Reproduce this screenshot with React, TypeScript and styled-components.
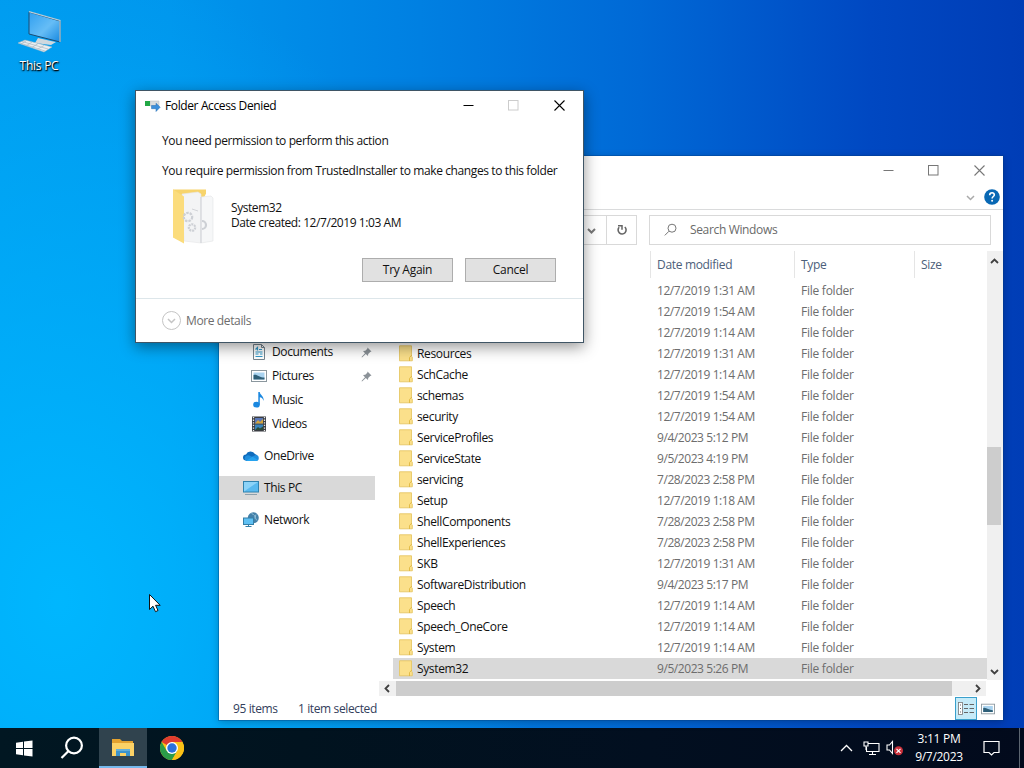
import React from "react";
import styled, { createGlobalStyle, css } from "styled-components";

const GlobalStyle = createGlobalStyle`
  * { box-sizing: border-box; }
  html, body { margin: 0; padding: 0; overflow: hidden; }
  body { font-family: "Open Sans", "Noto Sans", sans-serif; font-size: 12px; line-height: 16px; color: #111; letter-spacing: -0.38px; }
`;

const Desktop = styled.main`
  position: relative;
  width: 1024px;
  height: 768px;
  overflow: hidden;
  display: flex;
  flex-direction: column;
  justify-content: space-between;
  background:
    radial-gradient(ellipse 480px 640px at 60px 600px, rgba(0, 184, 255, 0.95), rgba(0, 180, 255, 0) 100%),
    linear-gradient(90deg, #009bef 0, #0096ed 170px, #0080e2 420px, #0069d6 640px, #0048c2 870px, #003db6 1024px);
`;

const Shortcut = styled.div`
  width: 78px;
  padding-top: 9px;
  display: flex;
  flex-direction: column;
  align-items: center;
  gap: 3px;
  color: #fff;
  letter-spacing: -0.25px;
  text-shadow: 0 1px 2px #000, 1px 1px 1px #000;
`;

const Panel = styled.section`
  position: absolute;
  display: flex;
  flex-direction: column;
  background: #fff;
`;

const ExplorerWindow = styled(Panel)`
  left: 219px;
  top: 156px;
  width: 784px;
  height: 564px;
  box-shadow: 0 0 0 1px rgba(0, 60, 130, 0.35), 0 2px 8px rgba(0, 0, 0, 0.25);
`;

const DialogWindow = styled(Panel)`
  left: 135px;
  top: 90px;
  width: 449px;
  height: 253px;
  border: 1px solid #3f5565;
  box-shadow: 0 4px 14px rgba(0, 0, 0, 0.42);
`;

const Caption = styled.header`
  height: 29px;
  padding-right: 1px;
  flex: none;
  display: flex;
  align-items: center;
  justify-content: flex-end;
`;

const CaptionTitle = styled.div`
  flex: 1;
  display: flex;
  align-items: center;
  gap: 4px;
  padding-left: 9px;
  color: #000;
`;

const CaptionButton = styled.button<{ $color: string }>`
  width: 45.5px;
  height: 29px;
  padding: 0;
  border: 0;
  background: none;
  display: flex;
  align-items: center;
  justify-content: center;
  color: ${(p) => p.$color};
`;

const Ribbon = styled.div`
  height: 25px;
  flex: none;
  border-bottom: 1px solid #dadbdc;
  display: flex;
  justify-content: flex-end;
  align-items: center;
  gap: 9px;
  padding-right: 3px;
`;

const AddressRow = styled.div`
  height: 41px;
  flex: none;
  display: flex;
  align-items: flex-start;
  padding: 5px 12px 0 12px;
  gap: 12px;
`;

const AddressBox = styled.div`
  flex: 1;
  height: 30px;
  border: 1px solid #d9d9d9;
  display: flex;
  justify-content: flex-end;
`;

const AddressCell = styled.div<{ $w: number; $line?: boolean }>`
  width: ${(p) => p.$w}px;
  display: flex;
  align-items: center;
  justify-content: center;
  ${(p) => p.$line && css`border-left: 1px solid #d9d9d9;`}
`;

const SearchBox = styled.div`
  width: 342px;
  height: 30px;
  border: 1px solid #d9d9d9;
  display: flex;
  align-items: center;
  gap: 12px;
  padding-left: 14px;
  color: #6a6a6a;
  letter-spacing: -0.35px;
`;

const Body = styled.div`
  flex: 1;
  min-height: 0;
  display: flex;
`;

const NavPane = styled.nav`
  width: 156px;
  padding-top: 89px;
  display: flex;
  flex-direction: column;
`;

const NavItem = styled.div<{ $child?: boolean; $gap?: boolean; $active?: boolean }>`
  height: 24px;
  flex: none;
  margin-top: ${(p) => (p.$gap ? 8 : 0)}px;
  padding: 0 3px 0 ${(p) => (p.$child ? 32 : 24)}px;
  display: flex;
  align-items: center;
  gap: 5px;
  background: ${(p) => (p.$active ? "#d9d9d9" : "transparent")};
  svg:last-child { margin-left: auto; }
  svg:first-child { margin-left: 0; }
`;

const ListArea = styled.div`
  flex: 1;
  min-width: 0;
  margin-left: 4px;
  display: flex;
  flex-direction: column;
`;

const ListTop = styled.div`
  height: 429px;
  flex: none;
  display: flex;
`;

const FileList = styled.div`
  flex: 1;
  display: flex;
  flex-direction: column;
  padding-left: 14px;
`;

const columns = "258px 144px 120px 1fr";

const HeaderRow = styled.div`
  height: 29px;
  flex: none;
  display: grid;
  grid-template-columns: ${columns};
`;

const HeaderCell = styled.div`
  height: 27px;
  padding: 6px 0 0 6px;
  border-right: 1px solid #e5e5e5;
  color: #4c607a;
  letter-spacing: -0.32px;
  &:last-child { border-right: 0; }
`;

const FileRow = styled.div<{ $selected?: boolean }>`
  height: 21px;
  flex: none;
  display: grid;
  grid-template-columns: ${columns};
  align-items: center;
  background: ${(p) => (p.$selected ? "#d9d9d9" : "transparent")};
`;

const NameCell = styled.div`
  display: flex;
  align-items: center;
  gap: 4px;
  padding-left: 6px;
  letter-spacing: -0.36px;
`;

const DataCell = styled.div<{ $ls: number }>`
  padding-left: 6px;
  color: #6d6d6d;
  letter-spacing: ${(p) => p.$ls}px;
`;

const VScroll = styled.div`
  width: 16px;
  background: #f0f0f0;
  display: flex;
  flex-direction: column;
  align-items: center;
  padding: 6px 2px 4px 0;
  svg:last-child { margin-top: auto; }
`;

const VThumb = styled.div`
  width: 14px;
  height: 78px;
  flex: none;
  margin-top: 181px;
  background: #cdcdcd;
`;

const HScroll = styled.div`
  height: 15px;
  width: 607px;
  margin-top: 1px;
  flex: none;
  background: #f0f0f0;
  display: flex;
  align-items: center;
`;

const HArrow = styled.div<{ $w: number; $pad?: number }>`
  width: ${(p) => p.$w}px;
  padding-left: ${(p) => p.$pad ?? 0}px;
  display: flex;
  justify-content: center;
`;

const HThumb = styled.div`
  width: 556px;
  height: 15px;
  background: #cdcdcd;
`;

const StatusBar = styled.footer`
  height: 23px;
  flex: none;
  display: flex;
  align-items: center;
  padding: 0 4px 0 14px;
  color: #33405c;
`;

const StatusText = styled.span<{ $w?: number }>`
  width: ${(p) => (p.$w ? p.$w + "px" : "auto")};
  margin-right: ${(p) => (p.$w ? 0 : "auto")};
`;

const ViewButton = styled.button<{ $on?: boolean }>`
  width: 22px;
  height: 23px;
  padding: 0;
  display: flex;
  align-items: center;
  justify-content: center;
  border: ${(p) => (p.$on ? "1px solid #3aa0cc" : "1px solid transparent")};
  background: ${(p) => (p.$on ? "#c6ebf8" : "transparent")};
`;

const DialogBody = styled.div`
  flex: 1;
  display: flex;
  flex-direction: column;
  padding: 13px 27px 0 26px;
  color: #111;
`;

const Message = styled.p`
  margin: 0 0 14px;
  white-space: nowrap;
  letter-spacing: -0.39px;
`;

const FolderInfo = styled.div`
  display: flex;
  gap: 15px;
  margin-top: -5px;
  padding-left: 8px;
  height: 66px;
`;

const FolderText = styled.div`
  padding-top: 12px;
  line-height: 15px;
  letter-spacing: -0.43px;
`;

const Buttons = styled.div`
  display: flex;
  justify-content: flex-end;
  gap: 12px;
  margin-top: 4px;
`;

const PushButton = styled.button`
  width: 91px;
  height: 24px;
  padding: 0;
  border: 1px solid #adadad;
  background: #e1e1e1;
  font: inherit;
  letter-spacing: -0.28px;
  color: #111;
`;

const DialogFooter = styled.footer`
  height: 44px;
  flex: none;
  border-top: 1px solid #dde6ea;
  display: flex;
  align-items: center;
  gap: 5px;
  padding-left: 26px;
  color: #6d6d6d;
`;

const Taskbar = styled.div`
  height: 40px;
  display: flex;
  background: linear-gradient(90deg, #011722 0, #01131f 300px, #020f20 650px, #020a1c 1024px);
  color: #fff;
`;

const TaskButton = styled.button<{ $w: number; $after?: number; $active?: boolean }>`
  width: ${(p) => p.$w}px;
  height: 40px;
  margin-right: ${(p) => p.$after ?? 0}px;
  padding: 0;
  border: 0;
  display: flex;
  align-items: center;
  justify-content: center;
  background: ${(p) => (p.$active ? "#30434e" : "none")};
  ${(p) => p.$active && css`border-bottom: 2px solid #76b9ed;`}
`;

const Tray = styled.div`
  margin-left: auto;
  display: flex;
  align-items: center;
`;

const TrayIcon = styled.div<{ $w: number; $after?: number }>`
  width: ${(p) => p.$w}px;
  margin-right: ${(p) => p.$after ?? 0}px;
  display: flex;
  justify-content: center;
`;

const Clock = styled.div`
  width: 66px;
  text-align: center;
  line-height: 18px;
  letter-spacing: -0.3px;
`;

const ShowDesktop = styled.div`
  width: 5px;
  height: 40px;
  border-left: 1px solid #5c6570;
`;

const Pointer = styled.svg`
  position: absolute;
  left: 148px;
  top: 593px;
`;

const MinIcon = () => <svg width="11" height="11"><path d="M0.5 5.5h10" stroke="currentColor" /></svg>;
const MaxIcon = () => <svg width="11" height="11"><rect x=".5" y=".5" width="9.5" height="9.5" fill="none" stroke="currentColor" /></svg>;
const CloseIcon = () => <svg width="11" height="11"><path d="M.5 .5l10 10M10.5 .5l-10 10" stroke="currentColor" strokeWidth="1.1" /></svg>;

const chevrons = {
  up: "M1 6L4.5 2.5L8 6",
  down: "M1 3L4.5 6.5L8 3",
  left: "M6 1L2.5 4.5L6 8",
  right: "M3 1L6.5 4.5L3 8",
};
const Chevron = ({ dir, color = "#404040", width = 1.8 }: { dir: keyof typeof chevrons; color?: string; width?: number }) => (
  <svg width="9" height="9"><path d={chevrons[dir]} fill="none" stroke={color} strokeWidth={width} /></svg>
);

const ComputerIcon = () => (
  <svg width="46" height="46" viewBox="0 0 46 46">
    <defs>
      <linearGradient id="screen" x1="0" y1="0" x2="1" y2="1">
        <stop offset="0" stopColor="#2f9ff0" /><stop offset=".55" stopColor="#66bdf6" /><stop offset="1" stopColor="#1688e0" />
      </linearGradient>
    </defs>
    <path d="M22 29l13 3 5 1-5 3-16-2z" fill="#cfd8de" />
    <path d="M13 3L44 12V33L13 25z" fill="url(#screen)" stroke="#1a4c74" strokeWidth="1" />
    <path d="M13 2.700L44 11.500V33" fill="none" stroke="#b9cdd8" strokeWidth="1.200" />
    <path d="M2 34l7-3 27 7-8 5z" fill="#e9eef1" stroke="#a8b4bc" strokeWidth=".5" />
    <path d="M6 32.500l26 7.500M4 34l25 8M10 32l-5 3M16 33l-6 4M22 34.500l-6 4M28 36.500l-6 3.500" stroke="#aab8c2" strokeWidth=".7" />
  </svg>
);

const MoveIcon = () => (
  <svg width="16" height="16" viewBox="0 0 16 16">
    <path d="M5 3h9v5H5z" fill="#d9dcde" stroke="#b5babd" strokeWidth=".5" />
    <rect x="0" y="3" width="5" height="5" fill="#22a845" />
    <path d="M6.500 7.500H11V5.200l4.200 4L11 13.500v-2.800H6.500z" fill="#3c8fdc" stroke="#276cb0" strokeWidth=".5" />
  </svg>
);

const SmallFolder = () => (
  <svg width="14" height="17" viewBox="0 0 14 17">
    <path d="M.5 .8h12v10.500l.8.800v3.700H.5z" fill="#fbe08b" stroke="#e6c765" strokeWidth=".9" />
    <path d="M10.500 16v-3.500l2.300-2.500" fill="none" stroke="#e0b840" strokeWidth=".9" />
  </svg>
);

const SystemFolder = () => (
  <svg width="46" height="58" viewBox="0 0 46 58">
    <path d="M3 1.500h33v4L13 54 3 49z" fill="#f7d46c" />
    <path d="M12 6l16-2 3 2v49l-17-2z" fill="#f3f4f5" stroke="#e5e6e8" strokeWidth=".6" />
    <path d="M31 9l10-1 2 2v43l-12 2z" fill="#f6f7f8" stroke="#e3e4e6" strokeWidth=".6" />
    <path d="M3 1.500l11 7V55.500L3 49.500z" fill="#fbdc7c" />
    <g fill="none" stroke="#cdd0d5" strokeWidth="2.200">
      <circle cx="18" cy="29" r="4.200" strokeDasharray="2.500 1" />
      <circle cx="22" cy="39.500" r="3.200" strokeDasharray="2 .8" />
      <path d="M32 33a4 4 0 0 1 0 8" />
    </g>
    <path d="M22 21l6 2M31 9v46" stroke="#c9ccd0" strokeWidth=".8" />
  </svg>
);

const DocumentIcon = () => (
  <svg width="16" height="16" viewBox="0 0 16 16">
    <path d="M2.500.5h8l3 3v12h-11z" fill="#fff" stroke="#76858f" />
    <path d="M10.500.5v3h3" fill="none" stroke="#76858f" />
    <path d="M4.500 5.500l2-2v3M8 5.500h3M4.500 8h7M4.500 10h3M9 10h2.500M4.500 12.500h7" stroke="#3199c9" strokeWidth="1.200" fill="none" />
  </svg>
);
const PictureIcon = ({ size = 16 }: { size?: number }) => (
  <svg width={size} height={size} viewBox="0 0 16 16">
    <rect x=".5" y="2.500" width="15" height="11" fill="#fff" stroke="#8b979e" />
    <rect x="2.500" y="4.500" width="11" height="7" fill="#a9d3f0" />
    <path d="M2.500 7c3-1.500 6 2.500 11 2.500v2h-11z" fill="#2e5f78" />
  </svg>
);
const MusicIcon = () => (
  <svg width="16" height="16" viewBox="0 0 16 16">
    <ellipse cx="5.500" cy="12.700" rx="3.300" ry="2.900" fill="#1b88e0" />
    <path d="M7.300 0h1.500c0 3 4.500 4 3.800 9-.6-2.500-2-3.500-3.800-3.800v7.500H7.300z" fill="#1b88e0" />
  </svg>
);
const VideoIcon = () => (
  <svg width="16" height="16" viewBox="0 0 16 16">
    <rect x="1" y=".5" width="14" height="15" fill="#3a3d42" />
    <path d="M2.500 1v14M13.500 1v14" stroke="#e9e9e9" strokeWidth="1.300" strokeDasharray="1.300 1.300" />
    <rect x="4" y="2" width="8" height="5.500" fill="#5a78b8" /><rect x="4" y="8.500" width="8" height="5.500" fill="#3984ba" />
    <path d="M4 7.500L7 4l2 2 3-3v4.500z" fill="#d2a53c" /><path d="M4 14l3-3 2 1.500 3-2V14z" fill="#294a35" />
  </svg>
);
const CloudIcon = () => (
  <svg width="16" height="16" viewBox="0 0 16 16">
    <path d="M3 12.500a3 3 0 0 1 0-6A5 5 0 0 1 12 6a3.500 3.500 0 0 1 1 6.500z" fill="#0f6cbd" />
    <path d="M3.200 13A3 3 0 0 1 4 7.500c2-1 3 .5 5 1.300L12.500 7A3 3 0 0 1 13 13z" fill="#1f8ede" />
    <path d="M3 13l6.500-4.300L15 12a3 3 0 0 1-2 1z" fill="#26a3ef" />
  </svg>
);
const MonitorIcon = () => (
  <svg width="16" height="16" viewBox="0 0 16 16">
    <rect x=".5" y="1.500" width="15" height="10.500" fill="#58b9ef" stroke="#3082ae" />
    <path d="M1 2h14L1 11.500z" fill="#8cd3f8" /><path d="M2 14.500h12" stroke="#8ca0ac" />
  </svg>
);
const NetworkIcon = () => (
  <svg width="16" height="16" viewBox="0 0 16 16">
    <circle cx="10.300" cy="5.800" r="5.500" fill="#4480a8" />
    <path d="M8.500 1.500c3 1 4 3 3.500 5M13 2.500c-1 2-1 4 1 6" stroke="#8fbdd6" fill="none" />
    <rect x=".5" y="6" width="10" height="6.500" fill="#5fc0f3" stroke="#347fa8" /><path d="M2.500 14.500h6M5.500 12.500v2" stroke="#347fa8" />
  </svg>
);
const PinIcon = () => (
  <svg width="11" height="11" viewBox="0 0 11 11">
    <path d="M6.500.5l4 4-1.300.4-2 2L7 9 4.800 7 1 10.500.5 10 4 6.200 2 4l2.300-.3 2-2z" fill="#8b9298" />
  </svg>
);
const SearchIcon = () => (
  <svg width="14" height="14" viewBox="0 0 14 14"><g fill="none" stroke="#777"><circle cx="8" cy="5.200" r="4" /><path d="M5 8.200L.8 12.400" /></g></svg>
);
const RefreshIcon = () => (
  <svg width="12" height="12" viewBox="0 0 12 12">
    <path d="M3.200 3.200A4 4 0 1 0 8.800 3" fill="none" stroke="#666" strokeWidth="1.600" /><path d="M2 1.800h4v4" fill="none" stroke="#666" strokeWidth="1.500" />
  </svg>
);
const HelpIcon = () => (
  <svg width="16" height="16" viewBox="0 0 16 16">
    <circle cx="8" cy="8" r="7.800" fill="#0868b4" />
    <path d="M5.700 6.200C5.700 2.800 10.500 3 10.300 6c-.1 1.500-2.200 1.600-2.200 3.500" fill="none" stroke="#fff" strokeWidth="1.600" /><circle cx="8.100" cy="11.800" r="1" fill="#fff" />
  </svg>
);
const DetailsIcon = () => (
  <svg width="16" height="13" viewBox="0 0 16 13">
    <rect x=".5" y=".5" width="4" height="12" fill="#fff" stroke="#777" strokeWidth=".8" />
    <path d="M2 3h1M2 6.500h1M2 10h1M6 2.500h4M11.500 2.500H16M6 6.500h4M11.500 6.500H16M6 10.500h4M11.500 10.500H16" stroke="#666" />
  </svg>
);
const WindowsLogo = () => (
  <svg width="17" height="17" viewBox="0 0 17 17"><path d="M0 2.700l7-1V8H0zM8 1.500L16.500.4V8H8zM0 9h7v6.300l-7-1zM8 9h8.500v7.600L8 15.500z" fill="#fff" /></svg>
);
const TaskSearch = () => (
  <svg width="24" height="24" viewBox="0 0 24 24"><g fill="none" stroke="#fff" strokeWidth="2.200"><circle cx="14" cy="9.500" r="7.900" /><path d="M8.300 15.200L1.500 22" /></g></svg>
);
const ExplorerIcon = () => (
  <svg width="22" height="19" viewBox="0 0 22 19">
    <path d="M0 1h8l2 2h11v5H0z" fill="#e3a22f" /><path d="M0 5h22v13H0z" fill="#fbd266" />
    <path d="M4 18v-7h14v7h-4v-3H8v3z" fill="#3c94cd" /><path d="M4 11h14v2H4z" fill="#64afd9" />
  </svg>
);
const ChromeIcon = () => (
  <svg width="24" height="24" viewBox="0 0 24 24">
    <circle cx="12" cy="12" r="12" fill="#fbc116" />
    <path d="M12 12L1.600 6A12 12 0 0 1 22.400 6H12z" fill="#df3c2f" />
    <path d="M1.600 6A12 12 0 0 0 12 24l5.200-9L12 12 6.800 15z" fill="#2b9c49" />
    <path d="M12 6h10.400A12 12 0 0 1 12 24l5.200-9z" fill="#fbc116" />
    <circle cx="12" cy="12" r="6" fill="#fff" /><circle cx="12" cy="12" r="4.700" fill="#2a71dc" />
  </svg>
);
const EthernetIcon = () => (
  <svg width="17" height="15" viewBox="0 0 17 15"><g fill="none" stroke="#fff" strokeWidth="1.100"><path d="M5 2.500h11v8H3.500V6M9.500 10.500v3M6 13.500h7M1 1h4v4H1zM3 5v4" /></g></svg>
);
const MutedIcon = () => (
  <svg width="18" height="16" viewBox="0 0 18 16">
    <path d="M1 5h2.500L6.500 1.500v12L3.500 10H1z" fill="none" stroke="#fff" strokeWidth="1.100" />
    <circle cx="12.500" cy="10.800" r="4.500" fill="#c9303a" /><path d="M10.500 8.800l4 4M14.500 8.800l-4 4" stroke="#fff" strokeWidth="1.200" />
  </svg>
);
const NotificationIcon = () => (
  <svg width="17" height="17" viewBox="0 0 17 17"><path d="M1 1.500h15v11h-5L8.500 15 6 12.500H1z" fill="none" stroke="#fff" strokeWidth="1.200" /></svg>
);

const files: [string, string][] = [
  ["", "12/7/2019 1:31 AM"],
  ["", "12/7/2019 1:54 AM"],
  ["", "12/7/2019 1:14 AM"],
  ["Resources", "12/7/2019 1:31 AM"],
  ["SchCache", "12/7/2019 1:14 AM"],
  ["schemas", "12/7/2019 1:54 AM"],
  ["security", "12/7/2019 1:54 AM"],
  ["ServiceProfiles", "9/4/2023 5:12 PM"],
  ["ServiceState", "9/5/2023 4:19 PM"],
  ["servicing", "7/28/2023 2:58 PM"],
  ["Setup", "12/7/2019 1:18 AM"],
  ["ShellComponents", "7/28/2023 2:58 PM"],
  ["ShellExperiences", "7/28/2023 2:58 PM"],
  ["SKB", "12/7/2019 1:31 AM"],
  ["SoftwareDistribution", "9/4/2023 5:17 PM"],
  ["Speech", "12/7/2019 1:14 AM"],
  ["Speech_OneCore", "12/7/2019 1:14 AM"],
  ["System", "12/7/2019 1:14 AM"],
  ["System32", "9/5/2023 5:26 PM"],
];

const Explorer = () => (
  <ExplorerWindow>
    <Caption>
      <CaptionButton $color="#777"><MinIcon /></CaptionButton>
      <CaptionButton $color="#777"><MaxIcon /></CaptionButton>
      <CaptionButton $color="#777"><CloseIcon /></CaptionButton>
    </Caption>
    <Ribbon><Chevron dir="down" color="#aaa" width={1.5} /><HelpIcon /></Ribbon>
    <AddressRow>
      <AddressBox>
        <AddressCell $w={30}><Chevron dir="down" color="#777" width={2} /></AddressCell>
        <AddressCell $w={30} $line><RefreshIcon /></AddressCell>
      </AddressBox>
      <SearchBox><SearchIcon />Search Windows</SearchBox>
    </AddressRow>
    <Body>
      <NavPane>
        <NavItem $child><DocumentIcon />Documents<PinIcon /></NavItem>
        <NavItem $child><PictureIcon />Pictures<PinIcon /></NavItem>
        <NavItem $child><MusicIcon />Music</NavItem>
        <NavItem $child><VideoIcon />Videos</NavItem>
        <NavItem $gap><CloudIcon />OneDrive</NavItem>
        <NavItem $gap $active><MonitorIcon />This PC</NavItem>
        <NavItem $gap><NetworkIcon />Network</NavItem>
      </NavPane>
      <ListArea>
        <ListTop>
          <FileList>
            <HeaderRow>
              <HeaderCell />
              <HeaderCell>Date modified</HeaderCell>
              <HeaderCell>Type</HeaderCell>
              <HeaderCell>Size</HeaderCell>
            </HeaderRow>
            {files.map(([name, date], i) => (
              <FileRow key={i} $selected={name === "System32"}>
                <NameCell><SmallFolder />{name}</NameCell>
                <DataCell $ls={-0.43}>{date}</DataCell>
                <DataCell $ls={-0.25}>File folder</DataCell>
              </FileRow>
            ))}
          </FileList>
          <VScroll><Chevron dir="up" /><VThumb /><Chevron dir="down" /></VScroll>
        </ListTop>
        <HScroll>
          <HArrow $w={17}><Chevron dir="left" /></HArrow>
          <HThumb />
          <HArrow $w={34} $pad={16}><Chevron dir="right" /></HArrow>
        </HScroll>
      </ListArea>
    </Body>
    <StatusBar>
      <StatusText $w={65}>95 items</StatusText>
      <StatusText>1 item selected</StatusText>
      <ViewButton $on><DetailsIcon /></ViewButton>
      <ViewButton><PictureIcon size={14} /></ViewButton>
    </StatusBar>
  </ExplorerWindow>
);

const Dialog = () => (
  <DialogWindow>
    <Caption>
      <CaptionTitle><MoveIcon />Folder Access Denied</CaptionTitle>
      <CaptionButton $color="#000"><MinIcon /></CaptionButton>
      <CaptionButton $color="#ccc"><MaxIcon /></CaptionButton>
      <CaptionButton $color="#000"><CloseIcon /></CaptionButton>
    </Caption>
    <DialogBody>
      <Message>You need permission to perform this action</Message>
      <Message>You require permission from TrustedInstaller to make changes to this folder</Message>
      <FolderInfo>
        <SystemFolder />
        <FolderText>System32<br />Date created: 12/7/2019 1:03 AM</FolderText>
      </FolderInfo>
      <Buttons><PushButton>Try Again</PushButton><PushButton>Cancel</PushButton></Buttons>
    </DialogBody>
    <DialogFooter>
      <svg width="19" height="19"><circle cx="9.500" cy="9.500" r="9" fill="none" stroke="#c4c4c4" /><path d="M6 8l3.500 3.500L13 8" fill="none" stroke="#c4c4c4" strokeWidth="1.500" /></svg>
      More details
    </DialogFooter>
  </DialogWindow>
);

export default function App() {
  return (
    <Desktop>
      <GlobalStyle />
      <Shortcut><ComputerIcon />This PC</Shortcut>
      <Explorer />
      <Dialog />
      <Pointer width="14" height="21" viewBox="0 0 14 21">
        <path d="M1.500 1.500v15l3.500-3.300 2.500 5.500 2.500-1.200-2.400-5.200h4.600z" fill="#fff" stroke="#111" />
      </Pointer>
      <Taskbar>
        <TaskButton $w={48}><WindowsLogo /></TaskButton>
        <TaskButton $w={48} $after={3}><TaskSearch /></TaskButton>
        <TaskButton $w={48} $active><ExplorerIcon /></TaskButton>
        <TaskButton $w={50}><ChromeIcon /></TaskButton>
        <Tray>
          <TrayIcon $w={25}><svg width="13" height="8"><path d="M1 7l5.500-5.500L12 7" fill="none" stroke="#fff" strokeWidth="1.300" /></svg></TrayIcon>
          <TrayIcon $w={24}><EthernetIcon /></TrayIcon>
          <TrayIcon $w={23}><MutedIcon /></TrayIcon>
          <Clock>3:11 PM<br />9/7/2023</Clock>
          <TrayIcon $w={38} $after={9}><NotificationIcon /></TrayIcon>
          <ShowDesktop />
        </Tray>
      </Taskbar>
    </Desktop>
  );
}
